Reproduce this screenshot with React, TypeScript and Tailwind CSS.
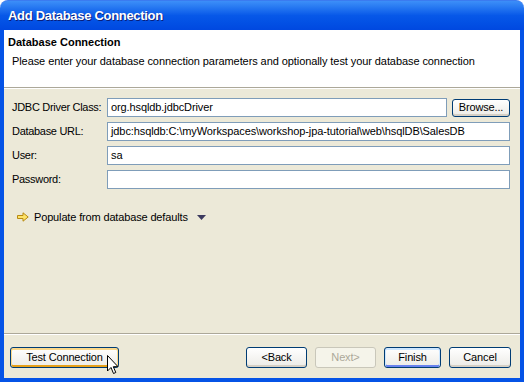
/**
 * XP-style "Add Database Connection" wizard dialog
 */
const FONT = "font-['Tahoma','Liberation_Sans',sans-serif]"

function XpButton({
  label, width, variant = 'normal',
}: { label: string; width: string; variant?: 'normal' | 'hot' | 'default' | 'disabled' }) {
  const outer = variant === 'disabled'
    ? 'border-[#c9c7ba] text-[#aca899]'
    : 'border-[#003c74] text-black'
  const inner = variant === 'hot'
    ? 'shadow-[inset_0_1px_0_1px_#fbd88a,inset_0_-1px_0_1px_#e5a01a]'
    : variant === 'default'
      ? 'shadow-[inset_0_1px_0_1px_#cee7ff,inset_0_-1px_0_1px_#6982ee]'
      : variant === 'disabled'
        ? ''
        : 'shadow-[inset_0_-2px_0_0_#d6d0c5]'
  return (
    <div
      className={`${width} h-[21px] rounded-[3px] border flex items-center justify-center text-[11px] tracking-[-0.15px] ${outer} ${inner} ${
        variant === 'disabled' ? 'bg-[#f5f4ea]' : 'bg-gradient-to-b from-white to-[#ecebe6]'
      }`}
    >
      {label}
    </div>
  )
}

function Field({ label, value, children }: { label: string; value: string; children?: React.ReactNode }) {
  return (
    <div className="flex items-center h-[19px]">
      <span className="w-[95px] shrink-0 text-[11px] tracking-[-0.3px] text-black">{label}</span>
      <div className="flex-1 h-[19px] border border-[#7f9db9] bg-white flex items-center px-[3px] text-[11px] tracking-[-0.1px] text-black whitespace-nowrap overflow-hidden">
        {value}
      </div>
      {children}
    </div>
  )
}

export default function App() {
  return (
    <div className={`w-[524px] h-[382px] flex flex-col ${FONT} select-none relative`}>
      {/* Title bar */}
      <div className="h-[30px] shrink-0 rounded-t-[8px] bg-gradient-to-b from-[#3d8ff8] via-[#0758e8] to-[#0048e0] flex items-center pl-[8px] border-t border-[#3b7bf0]">
        <span className="text-white font-bold text-[13px] tracking-[-0.3px] font-['Trebuchet_MS','Liberation_Sans',sans-serif] [text-shadow:1px_1px_0_#0a1e7a]">
          Add Database Connection
        </span>
      </div>

      {/* Frame */}
      <div className="flex-1 flex flex-col border-x-4 border-b-4 border-[#0553e6] bg-[#ece9d8] min-h-0">
        {/* Header */}
        <div className="h-[57px] bg-white shrink-0 px-[4px] pt-[5px]">
          <div className="text-[11px] leading-[14px] font-bold text-black">Database Connection</div>
          <div className="text-[11px] leading-[14px] tracking-[-0.08px] text-black mt-[5px] pl-[4px]">
            Please enter your database connection parameters and optionally test your database connection
          </div>
        </div>
        <div className="h-px bg-[#aca899]" />
        <div className="h-px bg-white" />

        {/* Form */}
        <div className="flex-1 px-[8px] pt-[9px] flex flex-col">
          <div className="flex flex-col gap-[5px] pr-[2px]">
            <Field label="JDBC Driver Class:" value="org.hsqldb.jdbcDriver">
              <div className="ml-[5px] w-[58px] h-[18px] rounded-[3px] border border-[#003c74] bg-gradient-to-b from-white to-[#ecebe6] flex items-center justify-center text-[11px] tracking-[-0.15px] shadow-[inset_0_-2px_0_0_#d6d0c5]">
                Browse...
              </div>
            </Field>
            <Field label="Database URL:" value="jdbc:hsqldb:C:\myWorkspaces\workshop-jpa-tutorial\web\hsqlDB\SalesDB" />
            <Field label="User:" value="sa" />
            <Field label="Password:" value="" />
          </div>

          <div className="flex items-center mt-[21px] pl-[5px] h-[14px]">
            <svg width="12" height="10" viewBox="0 0 12 10" className="mr-[5px]">
              <path d="M0.5 3.5 H6 V0.8 L11.2 5 L6 9.2 V6.5 H0.5 Z" fill="#fde36a" stroke="#b88a12" strokeWidth="1" />
            </svg>
            <span className="text-[11px] tracking-[-0.15px] text-black">Populate from database defaults</span>
            <svg width="9" height="5" viewBox="0 0 9 5" className="ml-[9px] mt-[1px]">
              <path d="M0 0 H9 L4.5 5 Z" fill="#3c3a5e" />
            </svg>
          </div>
        </div>

        {/* Footer */}
        <div className="h-px bg-[#aca899]" />
        <div className="h-px bg-white" />
        <div className="h-[43px] shrink-0 flex items-start pt-[12px] pl-[6px] pr-[9px]">
          <XpButton label="Test Connection" width="w-[109px]" variant="hot" />
          <div className="flex-1" />
          <div className="flex gap-[8px]">
            <XpButton label="<Back" width="w-[61px]" />
            <XpButton label="Next>" width="w-[61px]" variant="disabled" />
            <XpButton label="Finish" width="w-[57px]" variant="default" />
            <XpButton label="Cancel" width="w-[62px]" />
          </div>
        </div>
      </div>

      {/* Mouse cursor */}
      <svg width="12" height="20" viewBox="0 0 12 20" className="absolute left-[107px] top-[355px]">
        <path d="M0.5 0.5 V16 L4 12.5 L6.5 18.5 L8.8 17.5 L6.3 11.7 H11 Z" fill="white" stroke="black" strokeWidth="1" strokeLinejoin="miter" />
      </svg>
    </div>
  )
}
